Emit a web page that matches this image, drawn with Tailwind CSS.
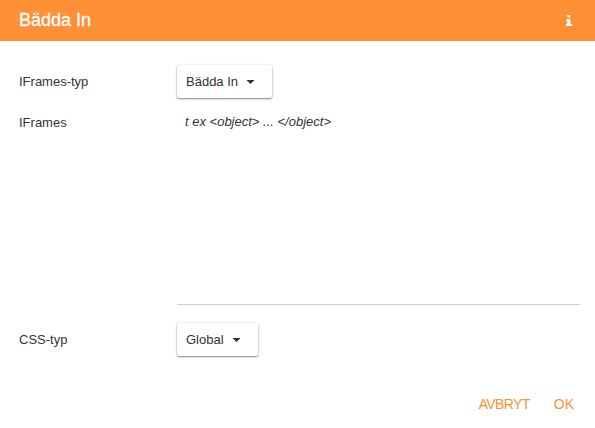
<!DOCTYPE html>
<html lang="sv">
<head>
  <meta charset="UTF-8" />
  <meta name="viewport" content="width=device-width, initial-scale=1.0" />
  <title>Bädda In</title>
  <script src="https://cdn.jsdelivr.net/npm/@tailwindcss/browser@4"></script>
</head>
<body class="bg-white font-['Liberation_Sans',Arial,sans-serif] text-[13px] text-[#333]">
  <div class="h-screen flex flex-col overflow-hidden">
    <header class="h-[41px] shrink-0 bg-[#ff9036] text-white flex items-center justify-between pl-[19px] pr-[23px] pb-[2px]">
      <h1 class="text-[18px] leading-none [-webkit-text-stroke:0.3px_white]">Bädda In</h1>
      <button aria-label="Info" class="pt-px">
        <svg class="w-[6px] h-[11px]" viewBox="0 0 6 11" fill="currentColor">
          <path d="M1.300 0h2.900v2.400H1.300zM0 4h4.500v5H6v2H0V9h1.200V5.500H0z" />
        </svg>
      </button>
    </header>

    <main class="flex-1 pl-[19px] pr-[15px] pt-6">
      <div class="flex items-center h-[33px]">
        <label class="w-[158px]">IFrames-typ</label>
        <button class="flex items-center gap-[9px] w-[95px] h-[33px] pl-[9px] rounded-[2px] bg-white shadow-[0_1px_2px_rgba(0,0,0,0.45),0_0_2px_rgba(0,0,0,0.15)]">
          Bädda In
          <svg class="w-[7px] h-1" viewBox="0 0 7 4" fill="currentColor"><path d="M0 0h7v.6L3.500 4 0 .6z" /></svg>
        </button>
      </div>

      <div class="flex mt-[9px]">
        <label class="w-[158px] pt-[6px]">IFrames</label>
        <textarea class="flex-1 h-[198px] px-2 pt-[5px] resize-none outline-none border-b border-[#ccc] italic placeholder:text-[#333]" placeholder="t ex &lt;object&gt; ... &lt;/object&gt;"></textarea>
      </div>

      <div class="flex items-center h-[33px] mt-[18px]">
        <label class="w-[158px]">CSS-typ</label>
        <button class="flex items-center gap-[9px] w-[81px] h-[33px] pl-[9px] rounded-[2px] bg-white shadow-[0_1px_2px_rgba(0,0,0,0.45),0_0_2px_rgba(0,0,0,0.15)]">
          Global
          <svg class="w-[7px] h-1" viewBox="0 0 7 4" fill="currentColor"><path d="M0 0h7v.6L3.500 4 0 .6z" /></svg>
        </button>
      </div>
    </main>

    <footer class="flex justify-end gap-6 pr-[21px] pb-[13px] text-[14px] text-[#ff9036]">
      <button class="tracking-[-0.6px]">AVBRYT</button>
      <button>OK</button>
    </footer>
  </div>
</body>
</html>
